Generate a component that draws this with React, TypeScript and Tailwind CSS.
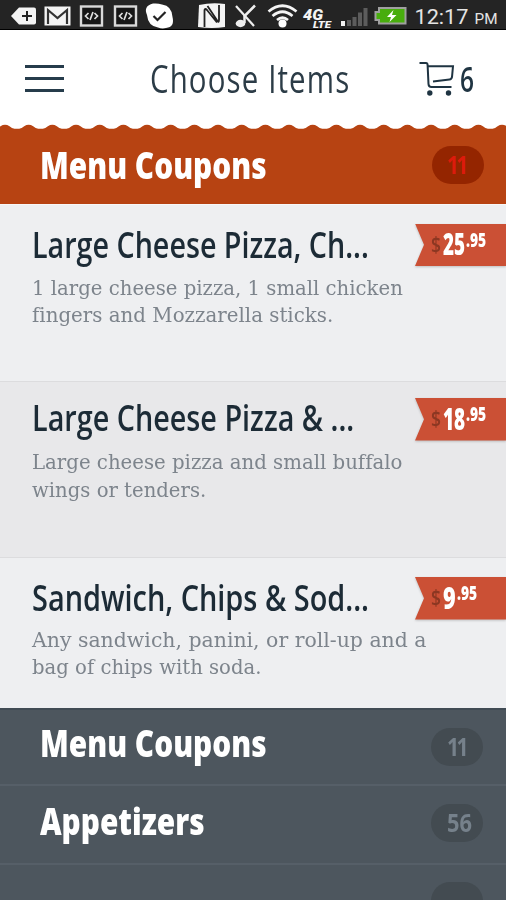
import { useLayoutEffect, useRef, useState } from "react";
import { clsx } from "clsx";

type FitProps = { text: string; width: number; className?: string };

/** Single line of text condensed horizontally to a given width. */
function Fit({ text, width, className }: FitProps) {
  const ref = useRef<HTMLSpanElement>(null);
  const [scale, setScale] = useState(1);
  useLayoutEffect(() => {
    if (ref.current) setScale(width / ref.current.offsetWidth);
  }, [text, width]);
  return (
    <span className={clsx("block shrink-0 whitespace-nowrap", className)} style={{ width }}>
      <span ref={ref} className="inline-block origin-left" style={{ transform: `scaleX(${scale})` }}>
        {text}
      </span>
    </span>
  );
}

function StatusBar() {
  return (
    <div className="flex h-[30px] w-full shrink-0 items-center border-b border-black bg-[#242424]">
      <svg width="506" height="30" viewBox="0 0 506 30" className="block shrink-0">
        <path d="M11 16 L19 7.5 H34 Q36 7.5 36 9.5 V22.500 Q36 24.500 34 24.500 H19 Z" fill="#f4f4f4" />
        <path d="M27 11 V21 M22 16 H32" stroke="#222" strokeWidth="2" />
        <rect x="44.500" y="6.500" width="26" height="19" fill="#f4f4f4" />
        <path d="M48 24 V10 L57.500 18 L67 10 V24" fill="none" stroke="#333" strokeWidth="2.200" />
        {[80, 114].map((x) => (
          <g key={x}>
            <rect x={x + 1} y="6.500" width="21" height="19" fill="#161616" stroke="#d9d9d9" strokeWidth="2.400" />
            <path
              d={`M${x + 8.5} 13 L${x + 5.5} 16 L${x + 8.5} 19 M${x + 14.5} 13 L${x + 17.5} 16 L${x + 14.5} 19 M${x + 13} 12 L${x + 10} 20`}
              fill="none"
              stroke="#ddd"
              strokeWidth="1.700"
            />
          </g>
        ))}
        <path d="M153 3.500 Q158 3 162 4.500 Q172 6 172.500 17 Q175 27 166 28 Q162 29 158 27.500 Q148 26 147 15 Q143 6 153 3.500 Z" fill="#fff" />
        <path d="M153.500 16 L157.500 20 L165.500 12" fill="none" stroke="#222" strokeWidth="2.200" />
        <path d="M199 5 Q212 2 225 4 V27 Q212 29 198 27 Z" fill="#f4f4f4" />
        <path d="M204.500 27 V10 Q205 8 207 10 L217 22.500 M207.500 6 L217.500 21 Q219 23 219 20 V5" fill="none" stroke="#222" strokeWidth="1.800" />
        <path d="M236 6 L254 26" stroke="#eee" strokeWidth="2.200" />
        <path d="M255 5.500 L244.500 16 V23" fill="none" stroke="#eee" strokeWidth="2.500" />
        <ellipse cx="240.500" cy="23.500" rx="4.800" ry="3.700" fill="#eee" />
        <g fill="none" stroke="#f4f4f4" strokeWidth="2.700">
          <path d="M268.500 11.500 Q282.500 0 296.500 11.500" />
          <path d="M272.500 16 Q282.500 7.500 292.500 16" />
          <path d="M277 20 Q282.500 15.500 288 20" />
        </g>
        <circle cx="282.500" cy="23.500" r="4" fill="#fff" />
        <text x="303" y="20" textLength="20" lengthAdjust="spacingAndGlyphs" fill="#f4f4f4" className="font-['Roboto',sans-serif] text-[15px] font-black italic">4G</text>
        <text x="313" y="28" textLength="18" lengthAdjust="spacingAndGlyphs" fill="#f4f4f4" className="font-['Roboto',sans-serif] text-[9px] font-black italic">LTE</text>
        <rect x="341" y="21" width="4" height="5" fill="#f4f4f4" />
        <g fill="#5c5c5c">
          <rect x="347" y="20" width="4" height="6" />
          <rect x="352.500" y="17" width="4" height="9" />
          <rect x="358" y="12.500" width="4" height="13.500" />
          <rect x="363.500" y="8" width="4" height="18" />
        </g>
        <path d="M379 8 H405.500 V23.500 H379 V20 H375.500 V12 H379 Z" fill="#48ad0d" stroke="#a0a0a0" strokeWidth="2" />
        <path d="M393.500 10 L387 17 H391 L389.500 22 L396.500 15 H392 Z" fill="#fff" />
        <text x="414.500" y="24" textLength="54" lengthAdjust="spacingAndGlyphs" fill="#e4e4e4" className="font-['Roboto',sans-serif] text-[20.500px]">12:17</text>
        <text x="474.500" y="24" textLength="23" lengthAdjust="spacingAndGlyphs" fill="#e4e4e4" className="font-['Roboto',sans-serif] text-[14px]">PM</text>
      </svg>
    </div>
  );
}

function Header() {
  return (
    <header className="flex h-[94px] shrink-0 items-start bg-white">
      <div className="mt-[35px] ml-[25px] flex w-[39px] flex-col gap-[9.300px]">
        <div className="h-[2.700px] bg-[#263c4b]" />
        <div className="h-[2.700px] bg-[#263c4b]" />
        <div className="h-[2.700px] bg-[#263c4b]" />
      </div>
      <Fit
        text="Choose Items"
        width={200}
        className="mt-[28px] ml-[86px] text-[39px] leading-none font-[400] tracking-[1.500px] text-[#2c3c47]"
      />
      <svg width="36" height="38" viewBox="0 0 36 38" className="mt-[30px] ml-[69px] block shrink-0" fill="none" stroke="#1f3442" strokeWidth="2">
        <path d="M0.500 3 H7 Q8.500 3 8.600 5 L9.500 24 Q9.600 27 12.500 27 H32.500" />
        <path d="M9 6.200 H34 L33 17 Q32.500 19.300 30.500 19.500 L14 21.500" />
        <circle cx="10.800" cy="33" r="2.700" fill="#1f3442" stroke="none" />
        <circle cx="29.500" cy="33" r="2.700" fill="#1f3442" stroke="none" />
      </svg>
      <Fit text="6" width={14} className="mt-[31px] ml-[5px] text-[35px] leading-none font-semibold text-[#1f3442]" />
    </header>
  );
}

function Scallops() {
  const period = 23.67;
  let d = "M-20 5";
  for (let i = -1; i < 22; i++) {
    const c = 5 + i * period;
    d += ` L${c - 9.5} 4.700 Q${c - 7} 4.200 ${c - 4.5} 2.200 Q${c} -0.700 ${c + 4.5} 2.200 Q${c + 7} 4.200 ${c + 9.5} 4.700`;
  }
  return (
    <svg width="506" height="5" viewBox="0 0 506 5" className="block shrink-0 bg-white">
      <path d={`${d} V6 H-20 Z`} fill="#b74312" />
    </svg>
  );
}

type BadgeProps = { count: string; width: number; className: string };

function Badge({ count, width, className }: BadgeProps) {
  return (
    <div className={clsx("flex h-[38px] w-[52px] shrink-0 rounded-full pt-[6.500px] pl-[15.500px] text-[24.500px] leading-none font-bold", className)}>
      <Fit text={count} width={width} />
    </div>
  );
}

type Item = {
  title: string;
  titleWidth: number;
  lines: [string, number][];
  dollars: string;
  dollarsWidth: number;
  cents: string;
  box: string;
  tag: string;
  desc: string;
};

const items: Item[] = [
  {
    title: "Large Cheese Pizza, Ch...",
    titleWidth: 337,
    lines: [["1 large cheese pizza, 1 small chicken", 371], ["fingers and Mozzarella sticks.", 301]],
    dollars: "25",
    dollarsWidth: 22,
    cents: ".95",
    box: "h-[177px] bg-[#eeeff1] pt-[21.500px] border-t border-[#f7f7f7]",
    tag: "mt-[-3px]",
    desc: "mt-[12px]",
  },
  {
    title: "Large Cheese Pizza & ...",
    titleWidth: 322,
    lines: [["Large cheese pizza and small buffalo", 370], ["wings or tenders.", 174]],
    dollars: "18",
    dollarsWidth: 22,
    cents: ".95",
    box: "h-[176px] bg-[#e8e8ea] pt-[18px] border-t border-[#dcdcde]",
    tag: "mt-[-2px]",
    desc: "mt-[13px]",
  },
  {
    title: "Sandwich, Chips & Sod...",
    titleWidth: 337,
    lines: [["Any sandwich, panini, or roll-up and a", 395], ["bag of chips with soda.", 229]],
    dollars: "9",
    dollarsWidth: 13,
    cents: ".95",
    box: "h-[151px] bg-[#eeeff1] pt-[22px] border-t border-[#dcdcde]",
    tag: "mt-[-3px]",
    desc: "mt-[10.500px]",
  },
];

function PriceTag({ item }: { item: Item }) {
  return (
    <div className={clsx("h-[42.500px] w-[91px] shrink-0 drop-shadow-[0_1px_1px_rgba(0,0,0,0.2)]", item.tag)}>
      <div className="flex h-full bg-[#cb5035] pl-[16px] leading-none font-bold text-white [clip-path:polygon(0_0,100%_0,100%_100%,0_100%,9px_50%)]">
        <Fit text="$" width={10} className="mt-[10px] text-[21px] font-semibold text-[#8c3722]" />
        <Fit text={item.dollars} width={item.dollarsWidth} className="mt-[5.500px] ml-[1.500px] text-[30px] font-extrabold" />
        <Fit text={item.cents} width={20} className="mt-[6px] ml-[1px] text-[20px] font-extrabold" />
      </div>
    </div>
  );
}

function MenuItem({ item }: { item: Item }) {
  return (
    <article className={clsx("flex shrink-0 items-start justify-between overflow-hidden pl-[32px]", item.box)}>
      <div className="w-[382px] shrink-0">
        <Fit text={item.title} width={item.titleWidth} className="h-[36px] text-[36px] leading-none font-[560] text-[#1c2b36]" />
        <div className={clsx("font-['DejaVu_Serif',serif] text-[21px] leading-[27.500px] text-[#7d848c] [font-variant-ligatures:none]", item.desc)}>
          {item.lines.map(([text, width]) => (
            <Fit key={text} text={text} width={width} className="h-[27.500px]" />
          ))}
        </div>
      </div>
      <PriceTag item={item} />
    </article>
  );
}

const heading = "text-[37px] leading-none font-extrabold text-white";

export default function App() {
  return (
    <div className="flex h-[900px] w-[506px] flex-col overflow-hidden bg-[#4d565e] font-['Open_Sans','Noto_Sans',sans-serif]">
      <StatusBar />
      <Header />
      <Scallops />
      <div className="flex h-[75px] shrink-0 items-start justify-between bg-[#b74312] pr-[22.500px] pl-[40px]">
        <Fit text="Menu Coupons" width={227} className={clsx("mt-[17px]", heading)} />
        <Badge count="11" width={19} className="mt-[17px] bg-[#942500] tracking-[-3px] text-[#dc1b0b]" />
      </div>
      {items.map((item) => (
        <MenuItem key={item.title} item={item} />
      ))}
      <div className="flex h-[76px] shrink-0 items-start justify-between border-t-2 border-[#414b54] pr-[23px] pl-[40px]">
        <Fit text="Menu Coupons" width={227} className={clsx("mt-[14px]", heading)} />
        <Badge count="11" width={19} className="mt-[18px] bg-[#434b51] tracking-[-3px] text-[#76818b]" />
      </div>
      <div className="flex h-[79px] shrink-0 items-start justify-between border-t-2 border-[#565f68] pr-[23px] pl-[40px]">
        <Fit text="Appetizers" width={165} className={clsx("mt-[16px]", heading)} />
        <Badge count="56" width={25} className="mt-[18px] bg-[#434b51] text-[#76818b]" />
      </div>
      <div className="flex h-[78px] shrink-0 items-start justify-end border-t-2 border-[#565f68] pr-[23px]">
        <div className="mt-[17px] h-[38px] w-[52px] rounded-full bg-[#434b51]" />
      </div>
    </div>
  );
}
